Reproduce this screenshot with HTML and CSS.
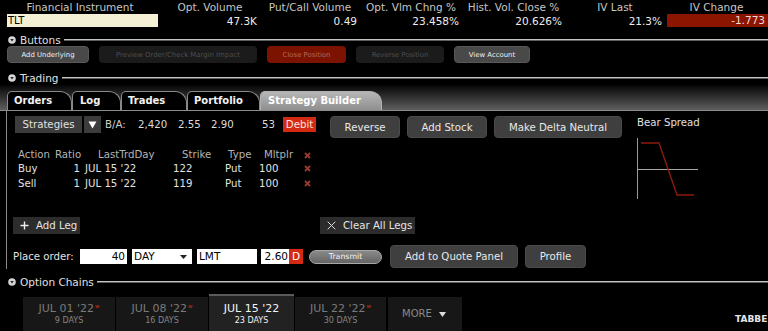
FILE: index.html
```html
<!DOCTYPE html>
<html>
<head>
<meta charset="utf-8">
<link rel="stylesheet" href="styles.css">
</head>
<body>
<div class="quote">
  <div class="lbl">Financial Instrument</div>
  <div class="lbl">Opt. Volume</div>
  <div class="lbl">Put/Call Volume</div>
  <div class="lbl">Opt. Vlm Chng %</div>
  <div class="lbl">Hist. Vol. Close %</div>
  <div class="lbl">IV Last</div>
  <div class="lbl">IV Change</div>
  <div class="sym">TLT</div>
  <div class="val">47.3K</div>
  <div class="val">0.49</div>
  <div class="val">23.458%</div>
  <div class="val">20.626%</div>
  <div class="val">21.3%</div>
  <div class="val neg">-1.773</div>
</div>

<div class="sec sec-buttons">
  <svg class="tog" viewBox="0 0 8 8"><circle cx="4" cy="4" r="3.8" fill="#d6d6d6"/><path d="M2.2 3 H5.8 L4 5.4 Z" fill="#2a2a2a"/></svg>
  <span>Buttons</span><i class="rule"></i>
</div>
<div class="btnbar">
  <div class="b b-on w-add">Add Underlying</div>
  <div class="b b-off w-prev">Preview Order/Check Margin Impact</div>
  <div class="b b-red w-close">Close Position</div>
  <div class="b b-off w-rev">Reverse Position</div>
  <div class="b b-on w-view">View Account</div>
</div>

<div class="sec sec-trading">
  <svg class="tog" viewBox="0 0 8 8"><circle cx="4" cy="4" r="3.8" fill="#d6d6d6"/><path d="M2.2 3 H5.8 L4 5.4 Z" fill="#2a2a2a"/></svg>
  <span>Trading</span><i class="rule"></i>
</div>

<div class="tabbar">
  <div class="tab t-orders">Orders</div>
  <div class="tab t-log">Log</div>
  <div class="tab t-trades">Trades</div>
  <div class="tab t-port">Portfolio</div>
  <div class="tab t-sb active">Strategy Builder</div>
</div>

<div class="panel">
  <div class="builder">
    <div class="row1">
      <div class="strat">Strategies</div>
      <div class="caret"><svg width="9" height="8" viewBox="0 0 9 8"><path d="M0.5 0.5 H8.5 L4.5 7.5 Z" fill="#fff"/></svg></div>
      <span class="ba ba-l">B/A:</span>
      <span class="ba ba-1">2,420</span>
      <span class="ba ba-2">2.55</span>
      <span class="ba ba-3">2.90</span>
      <span class="ba ba-4">53</span>
      <div class="debit">Debit</div>
      <div class="rbtn r-rev">Reverse</div>
      <div class="rbtn r-stock">Add Stock</div>
      <div class="rbtn r-mdn">Make Delta Neutral</div>
    </div>

    <div class="legs">
      <div class="lh h1">Action</div>
      <div class="lh h2">Ratio</div>
      <div class="lh h3">LastTrdDay</div>
      <div class="lh h4">Strike</div>
      <div class="lh h5">Type</div>
      <div class="lh h6">Mltplr</div>
      <div class="lh h7"><svg class="x" viewBox="0 0 7 7"><path d="M1 1 L6 6 M6 1 L1 6" stroke="#9b3a2c" stroke-width="1.8"/></svg></div>

      <div class="lc v1">Buy</div>
      <div class="lc v2">1</div>
      <div class="lc v3">JUL 15 '22</div>
      <div class="lc v4">122</div>
      <div class="lc v5">Put</div>
      <div class="lc v6">100</div>
      <div class="lc v7"><svg class="x" viewBox="0 0 7 7"><path d="M1 1 L6 6 M6 1 L1 6" stroke="#9b3a2c" stroke-width="1.8"/></svg></div>

      <div class="lc v1">Sell</div>
      <div class="lc v2">1</div>
      <div class="lc v3">JUL 15 '22</div>
      <div class="lc v4">119</div>
      <div class="lc v5">Put</div>
      <div class="lc v6">100</div>
      <div class="lc v7"><svg class="x" viewBox="0 0 7 7"><path d="M1 1 L6 6 M6 1 L1 6" stroke="#9b3a2c" stroke-width="1.8"/></svg></div>
    </div>

    <div class="legbtns">
      <div class="lb addleg"><svg class="ic" viewBox="0 0 9 9"><path d="M4.5 0.5 V8.5 M0.5 4.5 H8.5" stroke="#eee" stroke-width="1.4"/></svg><span>Add Leg</span></div>
      <div class="lb clear"><svg class="ic" viewBox="0 0 9 9"><path d="M0.7 0.7 L8.3 8.3 M8.3 0.7 L0.7 8.3" stroke="#ddd" stroke-width="1"/></svg><span>Clear All Legs</span></div>
    </div>

    <div class="order">
      <span class="plabel">Place order:</span>
      <div class="inp i-qty">40</div>
      <div class="inp i-tif"><span>DAY</span><svg width="7" height="4" viewBox="0 0 7 4"><path d="M0 0 H7 L3.5 4 Z" fill="#222"/></svg></div>
      <div class="inp i-type">LMT</div>
      <div class="inp i-px">2.60</div>
      <div class="dbox">D</div>
      <div class="transmit">Transmit</div>
      <div class="rbtn r-aqp">Add to Quote Panel</div>
      <div class="rbtn r-prof">Profile</div>
    </div>
  </div>

  <div class="pchart">
    <div class="ptitle">Bear Spread</div>
    <svg class="chart" width="64" height="66" viewBox="0 0 64 66">
      <path d="M0.5 2 V63" stroke="#9a9a9a" stroke-width="1"/>
      <path d="M0 33.5 H61" stroke="#a8a8a8" stroke-width="1"/>
      <path d="M4 7 H22 L40 59 H57" stroke="#8e1a0c" stroke-width="1.4" fill="none"/>
    </svg>
  </div>
</div>

<div class="sec sec-chains">
  <svg class="tog" viewBox="0 0 8 8"><circle cx="4" cy="4" r="3.8" fill="#d6d6d6"/><path d="M2.2 3 H5.8 L4 5.4 Z" fill="#2a2a2a"/></svg>
  <span>Option Chains</span><i class="rule"></i>
</div>

<div class="exp">
  <div class="et e1"><div class="edate">JUL 01 '22<sup>w</sup></div><div class="edays">9 DAYS</div></div>
  <div class="et e2"><div class="edate">JUL 08 '22<sup>w</sup></div><div class="edays">16 DAYS</div></div>
  <div class="et e3 active"><div class="edate">JUL 15 '22</div><div class="edays">23 DAYS</div></div>
  <div class="et e4"><div class="edate">JUL 22 '22<sup>w</sup></div><div class="edays">30 DAYS</div></div>
  <div class="et more"><span>MORE</span><svg width="7" height="5" viewBox="0 0 7 5"><path d="M0 0 H7 L3.5 5 Z" fill="#ddd"/></svg></div>
  <div class="tabbed">TABBE</div>
</div>
</body>
</html>
```

FILE: styles.css
```css
* { box-sizing: border-box; }
html, body { margin: 0; padding: 0; }
body {
  width: 768px;
  height: 331px;
  overflow: hidden;
  background: #000;
  color: #ddd;
  font-family: "DejaVu Sans", sans-serif;
  font-size: 10.2px;
}

/* quote header */
.quote {
  display: grid;
  grid-template-columns: 160px 100px 100px 102px 103px 100px 103px;
  grid-template-rows: 14px 14px;
}
.lbl {
  text-align: center;
  font-size: 10.5px;
  line-height: 14px;
  color: #c6c6c6;
  white-space: nowrap;
}
.sym {
  margin: 0 2px 1px 7px;
  background: #f4f0d6;
  color: #000;
  font-size: 10px;
  line-height: 13px;
  padding-left: 1px;
}
.val {
  text-align: right;
  padding-right: 3px;
  font-size: 10.5px;
  line-height: 14px;
  color: #ececec;
}
.val.neg {
  background: #8c1500;
  margin: 0 0 1px 2px;
  line-height: 13px;
  color: #f4dcd6;
}

/* section headers */
.sec {
  display: flex;
  align-items: center;
  height: 14px;
  padding-left: 8px;
  font-size: 10.5px;
  color: #e0e0e0;
}
.sec .tog { width: 8px; height: 8px; margin-right: 4px; flex: none; }
.sec .rule {
  flex: 1;
  height: 2px;
  margin-left: 3px;
  border-top: 1px solid #c4c4c4;
  border-bottom: 1px solid #5e5e5e;
}
.sec-buttons { margin-top: 5px; height: 13px; }
.sec-trading { margin-top: 8px; }
.sec-chains { margin-top: 6px; }

/* buttons bar */
.btnbar {
  display: flex;
  gap: 10px;
  padding-left: 7px;
  height: 17px;
}
.b {
  font-size: 6.9px;
  border-radius: 4px;
  display: flex;
  align-items: center;
  justify-content: center;
  white-space: nowrap;
}
.b-on { background: #494949; color: #f0f0f0; border: 1px solid #585858; }
.b-off { background: #1b1b1b; color: #4e4e4e; }
.b-red { background: #7b1300; color: #b46a58; }
.w-add { width: 82px; }
.w-prev { width: 158px; }
.w-close { width: 79px; }
.w-rev { width: 88px; }
.w-view { width: 76px; }

/* trading tabs */
.tabbar {
  height: 26px;
  padding: 6px 0 0 7px;
  display: flex;
  background: linear-gradient(#050505, #5e5e5e);
  border-bottom: 1px solid #8c8c8c;
}
.tab {
  height: 19px;
  padding-left: 6px;
  font-weight: bold;
  font-size: 10px;
  line-height: 18px;
  color: #f2f2f2;
  background: #000;
  border: 1px solid #8a8a8a;
  border-bottom: 0;
  border-radius: 5px 12px 0 0;
  white-space: nowrap;
}
.tab.active {
  background: linear-gradient(#b6b6b6, #8f8f8f);
  border-color: #b0b0b0;
  color: #fff;
}
.t-orders { width: 65px; }
.t-log { width: 49px; padding-left: 7px; }
.t-trades { width: 66px; }
.t-port { width: 73px; }
.t-sb { width: 122px; padding-left: 7px; }

/* panel */
.panel {
  display: flex;
  margin-left: 6px;
  border-left: 1px solid #8a8a8a;
  padding-top: 5px;
  height: 158px;
}
.builder { width: 630px; flex: none; }
.row1 {
  display: flex;
  align-items: flex-start;
  height: 22px;
}
.strat {
  margin-left: 8px;
  width: 67px;
  height: 17px;
  background: #3c3c3c;
  color: #e2e2e2;
  text-align: center;
  line-height: 17px;
}
.caret {
  margin-left: 2px;
  width: 17px;
  height: 17px;
  background: #3c3c3c;
  display: flex;
  align-items: center;
  justify-content: center;
}
.ba { line-height: 17px; color: #dcdcdc; white-space: nowrap; }
.ba-l { margin-left: 4px; width: 33px; color: #cfcfcf; }
.ba-1 { width: 40px; }
.ba-2 { width: 33px; }
.ba-3 { width: 51px; }
.ba-4 { width: 21px; }
.debit {
  width: 33px;
  height: 15px;
  margin-top: 1px;
  background: #d42a14;
  color: #fbe3de;
  text-align: center;
  line-height: 15px;
}
.rbtn {
  height: 22px;
  border-radius: 4px;
  background: #3f3f3f;
  border: 1px solid #4a4a4a;
  color: #e8e8e8;
  display: flex;
  align-items: center;
  justify-content: center;
  white-space: nowrap;
}
.r-rev { margin-left: 14px; width: 70px; }
.r-stock { margin-left: 7px; width: 80px; }
.r-mdn { margin-left: 7px; width: 128px; }

/* legs table */
.legs {
  display: grid;
  grid-template-columns: 37px 30px 85px 52px 35px 43px 15px;
  margin: 11px 0 0 11px;
}
.lh { line-height: 12px; color: #b4b4b4; white-space: nowrap; }
.lc { line-height: 15px; color: #e2e2e2; white-space: nowrap; }
.h3 { padding-left: 13px; }
.h4 { padding-left: 12px; }
.h5 { padding-left: 6px; }
.h6 { padding-left: 7px; }
.v2 { text-align: right; padding-right: 5px; }
.v4 { padding-left: 3px; }
.v5 { padding-left: 3px; }
.v6 { padding-left: 2px; }
.h7, .v7 { padding-left: 4px; display: flex; align-items: center; }
.x { width: 7px; height: 7px; }

/* leg buttons */
.legbtns { display: flex; margin-top: 26px; height: 17px; }
.lb {
  display: flex;
  align-items: center;
  background: #2c2c2c;
  color: #e4e4e4;
  white-space: nowrap;
  font-size: 10.2px;
}
.lb .ic { width: 9px; height: 9px; margin-right: 7px; }
.addleg { margin-left: 6px; width: 67px; padding-left: 7px; }
.clear { margin-left: 240px; width: 95px; padding-left: 7px; }

/* order row */
.order {
  display: flex;
  align-items: center;
  margin-top: 11px;
  height: 23px;
  padding-left: 6px;
}
.plabel { width: 67px; color: #e2e2e2; white-space: nowrap; }
.inp {
  height: 15px;
  background: #fff;
  color: #000;
  font-size: 10.5px;
  line-height: 15px;
  padding: 0 2px;
}
.i-qty { width: 47px; text-align: right; }
.i-tif { margin-left: 5px; width: 60px; display: flex; align-items: center; justify-content: space-between; padding-right: 5px; }
.i-type { margin-left: 5px; width: 60px; }
.i-px { margin-left: 4px; width: 28px; text-align: right; padding-right: 1px; }
.dbox {
  width: 14px;
  height: 15px;
  background: #d42a14;
  color: #fff;
  font-size: 10.5px;
  line-height: 15px;
  text-align: center;
}
.transmit {
  margin-left: 6px;
  width: 73px;
  height: 14px;
  border-radius: 7px;
  border: 1px solid #a8a8a8;
  background: linear-gradient(#8a8a8a, #646464);
  color: #f4f4f4;
  font-size: 7.8px;
  line-height: 12px;
  text-align: center;
}
.r-aqp { margin-left: 8px; width: 128px; height: 23px; }
.r-prof { margin-left: 7px; width: 61px; height: 23px; }

/* payoff chart */
.pchart { flex: 1; }
.ptitle { line-height: 14px; color: #e2e2e2; white-space: nowrap; }
.chart { display: block; margin-top: 6px; }

/* expiry tabs */
.exp {
  display: flex;
  margin-top: 5px;
  padding-left: 23px;
  gap: 1px;
  height: 40px;
  white-space: nowrap;
}
.et {
  flex: none;
  margin-top: 3px;
  background: #171717;
  text-align: center;
}
.e1, .e2 { width: 92px; }
.e3 { width: 85px; }
.e4 { width: 91px; }
.et.active {
  margin-top: 0;
  border-top: 2px solid #5a5a5a;
  background: #222;
}
.edate {
  font-size: 11px;
  line-height: 12px;
  padding-top: 6px;
  color: #7a7a7a;
}
.active .edate { padding-top: 7px; color: #f2f2f2; }
.edate sup {
  font-size: 5.5px;
  color: #c83220;
  vertical-align: top;
  line-height: 6px;
  margin-left: 1px;
}
.edays {
  font-size: 8px;
  line-height: 11px;
  color: #858585;
}
.active .edays { color: #f2f2f2; }
.more {
  width: 74px;
  margin-left: 1px;
  display: flex;
  align-items: flex-start;
  padding: 11px 0 0 14px;
  gap: 7px;
  font-size: 10px;
  line-height: 12px;
  color: #8a8a8a;
  text-align: left;
}
.more svg { margin-top: 4px; }
.tabbed {
  flex: none;
  margin: 20px 0 0 272px;
  font-size: 9px;
  font-weight: bold;
  line-height: 11px;
  color: #e6e6e6;
}
```
